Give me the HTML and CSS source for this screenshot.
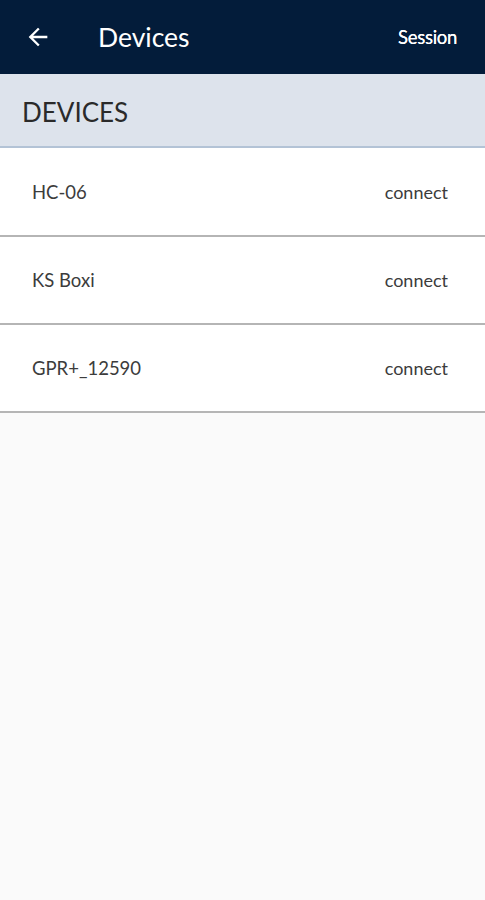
FILE: index.html
```html
<!DOCTYPE html>
<html lang="en">
<head>
    <meta charset="UTF-8">
    <meta name="viewport" content="width=device-width, initial-scale=1.0">
    <title>Devices</title>
    <link rel="stylesheet" href="styles.css">
</head>
<body>

<div class="app">
    <header class="toolbar">
        <button class="back" type="button" aria-label="Back">
            <svg width="24" height="24" viewBox="0 0 24 24">
                <path d="M20 11H7.83l5.59-5.59L12 4l-8 8 8 8 1.41-1.41L7.83 13H20v-2z" fill="#fff"/>
            </svg>
        </button>
        <h1 class="title">Devices</h1>
        <span class="session">Session</span>
    </header>

    <div class="section-head">DEVICES</div>

    <ul class="device-list">
        <li class="device">
            <span class="device-name">HC-06</span>
            <span class="device-action">connect</span>
        </li>
        <li class="device">
            <span class="device-name">KS Boxi</span>
            <span class="device-action">connect</span>
        </li>
        <li class="device">
            <span class="device-name">GPR+_12590</span>
            <span class="device-action">connect</span>
        </li>
    </ul>
</div>

</body>
</html>
```

FILE: styles.css
```css
html, body {
    margin: 0;
    padding: 0;
}
body {
    font-family: Lato, "Open Sans", sans-serif;
    background-color: #fafafa;
    color: #2b2b2b;
}
.app {
    min-height: 900px;
    background-color: #fafafa;
}
.toolbar {
    display: flex;
    align-items: center;
    height: 74px;
    padding: 0 28px 0 24px;
    background-color: #031c3a;
    color: #fff;
    box-sizing: border-box;
}
.back {
    display: flex;
    padding: 0;
    background: none;
    border: none;
    width: 28px;
    height: 24px;
    align-items: center;
}
.back svg {
    width: 28px;
    height: 28px;
}
.title {
    margin: 0 0 0 46px;
    font-size: 26.5px;
    font-weight: 400;
    flex: 1;
}
.session {
    font-size: 18.5px;
    font-weight: 400;
    letter-spacing: -0.3px;
    text-shadow: 0 0 0.4px #fff;
}
.section-head {
    display: flex;
    align-items: center;
    height: 74px;
    padding: 3px 0 0 22px;
    background-color: #dde3ec;
    border-bottom: 2px solid #b3c3d6;
    font-size: 26px;
    font-weight: 400;
    color: #2a2a2a;
    box-sizing: border-box;
}
.device-list {
    list-style: none;
    margin: 0;
    padding: 0;
}
.device {
    display: flex;
    justify-content: space-between;
    align-items: center;
    height: 88px;
    padding: 0 37px 0 32px;
    background-color: #fff;
    border-bottom: 2px solid #b5b5b5;
    font-size: 18.5px;
    font-weight: 400;
    color: #3c3c3c;
    box-sizing: border-box;
}
.device:first-child {
    height: 89px;
}
.device-action {
    font-size: 18px;
}
```
